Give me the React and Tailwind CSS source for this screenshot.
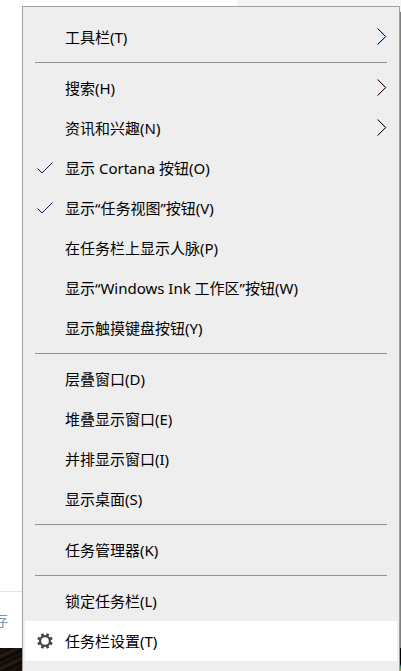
import React from "react";
import clsx from "clsx";

const groups = [
	[{ label: "工具栏(T)", submenu: true }],
	[
		{ label: "搜索(H)", submenu: true },
		{ label: "资讯和兴趣(N)", submenu: true },
		{ label: "显示 Cortana 按钮(O)", checked: true },
		{ label: "显示“任务视图”按钮(V)", checked: true },
		{ label: "在任务栏上显示人脉(P)" },
		{ label: "显示“Windows Ink 工作区”按钮(W)" },
		{ label: "显示触摸键盘按钮(Y)" },
	],
	[
		{ label: "层叠窗口(D)" },
		{ label: "堆叠显示窗口(E)" },
		{ label: "并排显示窗口(I)" },
		{ label: "显示桌面(S)" },
	],
	[{ label: "任务管理器(K)" }],
	[{ label: "锁定任务栏(L)" }, { label: "任务栏设置(T)", settings: true, active: true }],
];

const CheckIcon = () => (
	<svg width="16" height="12" viewBox="0 0 16 12" fill="none" aria-hidden="true">
		<path d="M0.5 6.5L5 11L15.5 0.5" stroke="#2a1048" strokeWidth="1" />
	</svg>
);

const ChevronIcon = () => (
	<svg width="10" height="18" viewBox="0 0 10 18" fill="none" aria-hidden="true">
		<path d="M1.1 0.5L9.3 8.5L1.1 16.5" stroke="#4a90d8" strokeWidth="0.6" />
		<path d="M0.5 0.5L8.5 8.5L0.5 16.5" stroke="#240818" strokeWidth="1" />
	</svg>
);

const GearIcon = () => (
	<svg width="16" height="16" viewBox="0 0 16 16" fill="none" stroke="#484848" aria-hidden="true">
		<circle cx="8" cy="8" r="4.9" strokeWidth="2.2" />
		{[22.5, 67.5, 112.5, 157.5, 202.5, 247.5, 292.5, 337.5].map((angle) => (
			<path key={angle} d="M8 0.2V3" strokeWidth="2.8" transform={`rotate(${angle} 8 8)`} />
		))}
	</svg>
);

const MenuItem = ({ item }) => (
	<button
		type="button"
		role={item.checked ? "menuitemcheckbox" : "menuitem"}
		aria-checked={item.checked}
		aria-haspopup={item.submenu ? "menu" : undefined}
		className={clsx(
			"flex h-10 w-full items-center pr-2.5 text-left hover:bg-white",
			item.active && "bg-white"
		)}
	>
		<span className="flex w-10 shrink-0 justify-center">
			{item.checked && <CheckIcon />}
			{item.settings && <GearIcon />}
		</span>
		<span className="flex-1 whitespace-nowrap">{item.label}</span>
		{item.submenu && <ChevronIcon />}
	</button>
);

// Page that is visible around the edges of the menu
const Backdrop = () => (
	<div className="flex h-full flex-col">
		<div className="flex flex-1">
			<div className="w-[59%] bg-white"></div>
			<div className="flex-1 bg-[#f5f5f5]"></div>
		</div>
		<div className="flex h-[57px] items-center border-t border-[#e4e4e4] bg-white">
			<div className="flex w-2 justify-end overflow-hidden text-[15px] text-[#8492b0]">
				<span className="shrink-0">存</span>
			</div>
		</div>
		<div className="flex h-[23px] justify-end bg-[repeating-linear-gradient(155deg,#080503_0px,#21150c_3px,#0e0805_5px,#2e2013_8px,#080503_11px)]">
			<div className="relative z-10 w-px bg-linear-to-b from-black from-65% via-[#16806c] via-80% to-[#b09a10]"></div>
		</div>
	</div>
);

const App = () => {
	return (
		<div className="relative h-screen overflow-hidden bg-white font-['Noto_Sans','Noto_Sans_CJK_SC',sans-serif]">
			<Backdrop />
			<div
				role="menu"
				className="absolute top-1.5 right-px left-[22px] border border-[#a0a0a0] bg-[#eeeeee] px-0.5 py-2.5 text-[15px] text-black shadow-[1px_6px_1px_0px_#808080]"
			>
				{groups.map((items, index) => (
					<React.Fragment key={index}>
						{index > 0 && <hr className="mx-2.5 my-[5px] border-[#919191]" />}
						{items.map((item) => (
							<MenuItem key={item.label} item={item} />
						))}
					</React.Fragment>
				))}
			</div>
		</div>
	);
};

export default App;
